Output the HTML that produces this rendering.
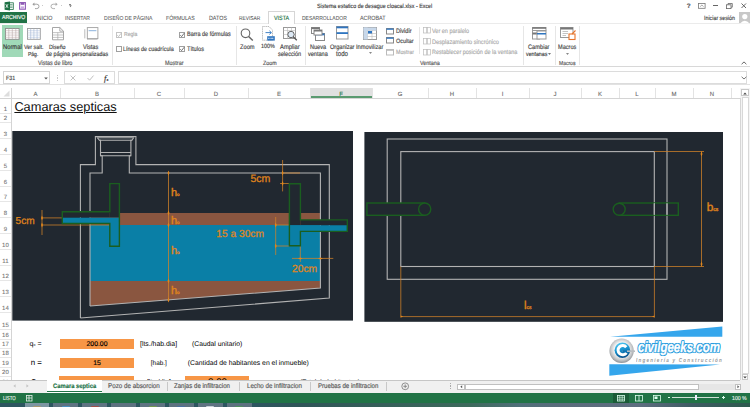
<!DOCTYPE html>
<html><head><meta charset="utf-8"><style>
html,body{margin:0;padding:0;}
body{width:750px;height:407px;overflow:hidden;position:relative;background:#fff;font-family:"Liberation Sans",sans-serif;text-rendering:geometricPrecision;}
body>div,body>span,body>svg{position:absolute;}
body>span{white-space:nowrap;display:block;-webkit-text-stroke:0.15px currentColor;}
svg{overflow:visible;}
</style></head><body>
<svg style="left:4px;top:1px" width="10" height="10"><rect x="4.5" y="1.8" width="4.8" height="6.6" fill="#fff" stroke="#1e7145" stroke-width=".8"/><path d="M5.5 3.6H8.6M5.5 5.1H8.6M5.5 6.6H8.6" stroke="#1e7145" stroke-width=".6"/><path d="M0.6 1.2L6 0.4V9.6L0.6 8.8Z" fill="#1e7145"/><path d="M1.8 3.2L4 6.8M4 3.2L1.8 6.8" stroke="#fff" stroke-width=".8"/></svg>
<svg style="left:19px;top:2px" width="7" height="8"><rect x="0.6" y="0.6" width="5.8" height="6.6" fill="#fff" stroke="#8e5bb5" stroke-width="1.1"/><rect x="1.6" y="0.6" width="3.8" height="2.2" fill="#8e5bb5"/><rect x="1.8" y="4.4" width="3.4" height="2.4" fill="#c8a8e0"/></svg>
<svg style="left:31.5px;top:2px" width="8" height="7"><path d="M2 2.2H4.8A2.2 2.2 0 0 1 4.8 6.6H3" fill="none" stroke="#9a9a9a" stroke-width=".9"/><path d="M0.4 2.2L2.4 0.4V4Z" fill="#9a9a9a"/></svg>
<div style="left:42.00px;top:5.00px;width:1.20px;height:1.00px;background:#c8c8c8;"></div>
<svg style="left:49.5px;top:2px" width="8" height="7"><path d="M6 2.2H3.2A2.2 2.2 0 0 0 3.2 6.6H5" fill="none" stroke="#a8a8a8" stroke-width=".9"/><path d="M7.6 2.2L5.6 0.4V4Z" fill="#a8a8a8"/></svg>
<div style="left:61.00px;top:5.00px;width:1.20px;height:1.00px;background:#c8c8c8;"></div>
<div style="left:68.80px;top:4.00px;width:2.40px;height:0.60px;background:#888;"></div>
<svg style="left:68.5px;top:5px" width="3" height="3"><path d="M0.2 0.3H2.8L1.5 2.2Z" fill="#777"/></svg>
<span style="left:317.00px;top:4.19px;font-size:6.154px;line-height:6.154px;color:#444;font-family:'Liberation Sans',sans-serif;transform:scaleX(0.870);transform-origin:0 0;">Sistema estatico de desague cloacal.xlsx - Excel</span>
<span style="left:686.80px;top:3.92px;font-size:6.500px;line-height:6.500px;color:#555;font-weight:bold;font-family:'Liberation Sans',sans-serif;">?</span>
<svg style="left:697.5px;top:3px" width="8" height="6"><rect x="0.5" y="0.5" width="6.6" height="4.8" fill="none" stroke="#777" stroke-width=".8"/><path d="M2.2 3.6L3.8 2L5.4 3.6" fill="none" stroke="#777" stroke-width=".7"/></svg>
<div style="left:712.80px;top:5.40px;width:4.80px;height:0.80px;background:#666;"></div>
<svg style="left:726px;top:2.8px" width="7" height="6"><path d="M2 1.8V0.5H6.3V4.2H5" fill="none" stroke="#666" stroke-width=".8"/><rect x="0.5" y="1.8" width="4.5" height="3.8" fill="#fff" stroke="#666" stroke-width=".8"/></svg>
<svg style="left:740.5px;top:3px" width="5.5" height="5.5"><path d="M0.5 0.5L5 5M5 0.5L0.5 5" stroke="#555" stroke-width=".9"/></svg>
<div style="left:0.00px;top:11.80px;width:27.40px;height:10.90px;background:#217346;"></div>
<span style="left:2.00px;top:16.30px;font-size:5.881px;line-height:5.881px;color:#fff;font-family:'Liberation Sans',sans-serif;transform:scaleX(0.870);transform-origin:0 0;">ARCHIVO</span>
<span style="left:35.50px;top:15.72px;font-size:6.210px;line-height:6.210px;color:#555;font-family:'Liberation Sans',sans-serif;transform:scaleX(0.870);transform-origin:0 0;-webkit-text-stroke:0.05px currentColor;">INICIO</span>
<span style="left:65.40px;top:16.52px;font-size:5.792px;line-height:5.792px;color:#555;font-family:'Liberation Sans',sans-serif;transform:scaleX(0.870);transform-origin:0 0;-webkit-text-stroke:0.05px currentColor;">INSERTAR</span>
<span style="left:103.90px;top:16.51px;font-size:5.848px;line-height:5.848px;color:#555;font-family:'Liberation Sans',sans-serif;transform:scaleX(0.870);transform-origin:0 0;-webkit-text-stroke:0.05px currentColor;">DISEÑO DE PÁGINA</span>
<span style="left:166.40px;top:16.64px;font-size:5.961px;line-height:5.961px;color:#555;font-family:'Liberation Sans',sans-serif;transform:scaleX(0.870);transform-origin:0 0;-webkit-text-stroke:0.05px currentColor;">FÓRMULAS</span>
<span style="left:208.60px;top:15.73px;font-size:6.174px;line-height:6.174px;color:#555;font-family:'Liberation Sans',sans-serif;transform:scaleX(0.870);transform-origin:0 0;-webkit-text-stroke:0.05px currentColor;">DATOS</span>
<span style="left:239.40px;top:16.54px;font-size:5.606px;line-height:5.606px;color:#555;font-family:'Liberation Sans',sans-serif;transform:scaleX(0.870);transform-origin:0 0;-webkit-text-stroke:0.05px currentColor;">REVISAR</span>
<span style="left:302.40px;top:16.53px;font-size:5.758px;line-height:5.758px;color:#555;font-family:'Liberation Sans',sans-serif;transform:scaleX(0.870);transform-origin:0 0;-webkit-text-stroke:0.05px currentColor;">DESARROLLADOR</span>
<span style="left:360.00px;top:15.73px;font-size:6.185px;line-height:6.185px;color:#555;font-family:'Liberation Sans',sans-serif;transform:scaleX(0.870);transform-origin:0 0;-webkit-text-stroke:0.05px currentColor;">ACROBAT</span>
<div style="left:0.00px;top:22.60px;width:750.00px;height:0.70px;background:#ebebeb;"></div>
<div style="left:268.40px;top:11.40px;width:26.40px;height:12.20px;border:1px solid #d6d6d6;box-sizing:border-box;background:#fff;border-bottom:none"></div>
<span style="left:274.00px;top:15.77px;font-size:6.209px;line-height:6.209px;color:#217346;font-family:'Liberation Sans',sans-serif;transform:scaleX(0.870);transform-origin:0 0;">VISTA</span>
<span style="left:704.00px;top:15.51px;font-size:6.109px;line-height:6.109px;color:#444;font-family:'Liberation Sans',sans-serif;transform:scaleX(0.870);transform-origin:0 0;">Iniciar sesión</span>
<div style="left:738.80px;top:11.50px;width:11.20px;height:11.50px;background:#c8c8c8;"></div>
<svg style="left:738.8px;top:11.5px" width="11.2" height="11.5"><circle cx="5.8" cy="4.6" r="2.6" fill="#fff"/><path d="M1 11.5 Q5.8 5.8 10.6 11.5Z" fill="#fff"/></svg>
<div style="left:0.00px;top:66.40px;width:750.00px;height:1.00px;background:#d8d8d8;"></div>
<div style="left:112.30px;top:25.50px;width:0.80px;height:39.00px;background:#e6e6e6;"></div>
<div style="left:235.60px;top:25.50px;width:0.80px;height:39.00px;background:#e6e6e6;"></div>
<div style="left:305.40px;top:25.50px;width:0.80px;height:39.00px;background:#e6e6e6;"></div>
<div style="left:522.70px;top:25.50px;width:0.80px;height:39.00px;background:#e6e6e6;"></div>
<div style="left:554.50px;top:25.50px;width:0.80px;height:39.00px;background:#e6e6e6;"></div>
<div style="left:579.30px;top:25.50px;width:0.80px;height:39.00px;background:#e6e6e6;"></div>
<div style="left:419.40px;top:27.20px;width:0.70px;height:27.30px;background:#e6e6e6;"></div>
<div style="left:1.80px;top:25.40px;width:21.20px;height:31.60px;background:#a0d9b8;"></div>
<svg style="left:5.4px;top:27.6px" width="15" height="12"><rect x="0.5" y="0.5" width="13.6" height="10.8" fill="#fff" stroke="#8a8a8a" stroke-width=".9"/><path d="M0.5 2.7H14M0.5 4.9H14M0.5 7.1H14M0.5 9.3H14" stroke="#c9b3b3" stroke-width=".6"/><path d="M3.8 .5V11.3M7.3 .5V11.3M10.8 .5V11.3" stroke="#b5a8a8" stroke-width=".6"/></svg>
<span style="left:2.80px;top:44.91px;font-size:6.673px;line-height:6.673px;color:#333;font-family:'Liberation Sans',sans-serif;transform:scaleX(0.870);transform-origin:0 0;">Normal</span>
<svg style="left:26.8px;top:27.6px" width="15" height="12"><rect x="0.5" y="0.5" width="12.8" height="10.8" fill="#fff" stroke="#9a9a9a" stroke-width=".9"/><path d="M0.5 2.7H13.3M0.5 4.9H13.3M0.5 7.1H13.3M0.5 9.3H13.3" stroke="#b8c8e0" stroke-width=".6"/><path d="M3.7 .5V11.3M6.9 .5V11.3M10.1 .5V11.3" stroke="#9fb4d4" stroke-width=".6"/></svg>
<span style="left:23.80px;top:44.67px;font-size:6.207px;line-height:6.207px;color:#444;font-family:'Liberation Sans',sans-serif;transform:scaleX(0.870);transform-origin:0 0;">Ver salt.</span>
<span style="left:28.40px;top:53.18px;font-size:5.758px;line-height:5.758px;color:#444;font-family:'Liberation Sans',sans-serif;transform:scaleX(0.870);transform-origin:0 0;">Pág.</span>
<svg style="left:51.5px;top:26.8px" width="13" height="14"><path d="M0.5 0.5H7.8L11.5 4.2V12.8H0.5Z" fill="#fff" stroke="#9c9c9c" stroke-width=".9"/><path d="M7.8 0.5V4.2H11.5" fill="none" stroke="#9c9c9c" stroke-width=".8"/><path d="M1 5.6H11M1 8H11M1 10.4H11M5.8 5.6V12.8" stroke="#aaa" stroke-width=".7"/></svg>
<span style="left:49.40px;top:44.70px;font-size:6.133px;line-height:6.133px;color:#444;font-family:'Liberation Sans',sans-serif;transform:scaleX(0.870);transform-origin:0 0;">Diseño</span>
<span style="left:45.70px;top:52.48px;font-size:6.309px;line-height:6.309px;color:#444;font-family:'Liberation Sans',sans-serif;transform:scaleX(0.870);transform-origin:0 0;">de página</span>
<svg style="left:83.6px;top:26.8px" width="15" height="14"><path d="M0.8 2.2V11.4" stroke="#aaa" stroke-width=".8"/><path d="M3 12.3H13.5" stroke="#b5b5b5" stroke-width=".8"/><rect x="3.3" y="0.6" width="10.6" height="11" fill="#fff" stroke="#a0a0a0" stroke-width=".9"/><path d="M4.6 3.7H12.4" stroke="#7fa9d8" stroke-width=".9"/></svg>
<span style="left:82.80px;top:44.83px;font-size:6.462px;line-height:6.462px;color:#444;font-family:'Liberation Sans',sans-serif;transform:scaleX(0.870);transform-origin:0 0;">Vistas</span>
<span style="left:71.80px;top:52.37px;font-size:6.206px;line-height:6.206px;color:#444;font-family:'Liberation Sans',sans-serif;transform:scaleX(0.870);transform-origin:0 0;">personalizadas</span>
<span style="left:37.60px;top:61.38px;font-size:6.317px;line-height:6.317px;color:#555;font-family:'Liberation Sans',sans-serif;transform:scaleX(0.870);transform-origin:0 0;">Vistas de libro</span>
<div style="left:115.7px;top:31.5px;width:6px;height:6px;border:0.8px solid #c4c4c4;box-sizing:border-box;background:#fff"></div>
<svg style="left:115.7px;top:31.5px" width="7" height="7"><path d="M1.3 3.2 L2.6 4.6 L5.2 1.2" fill="none" stroke="#b8b8b8" stroke-width=".8"/></svg>
<span style="left:123.70px;top:33.20px;font-size:5.854px;line-height:5.854px;color:#aaa;font-family:'Liberation Sans',sans-serif;transform:scaleX(0.870);transform-origin:0 0;">Regla</span>
<div style="left:115.7px;top:45.8px;width:6px;height:6px;border:0.8px solid #a0a0a0;box-sizing:border-box;background:#fff"></div>
<span style="left:123.20px;top:47.09px;font-size:6.293px;line-height:6.293px;color:#444;font-family:'Liberation Sans',sans-serif;transform:scaleX(0.870);transform-origin:0 0;">Líneas de cuadrícula</span>
<div style="left:178.7px;top:31.5px;width:6px;height:6px;border:0.8px solid #a0a0a0;box-sizing:border-box;background:#fff"></div>
<svg style="left:178.7px;top:31.5px" width="7" height="7"><path d="M1.3 3.2 L2.6 4.6 L5.2 1.2" fill="none" stroke="#555" stroke-width=".8"/></svg>
<span style="left:186.80px;top:32.48px;font-size:6.338px;line-height:6.338px;color:#444;font-family:'Liberation Sans',sans-serif;transform:scaleX(0.870);transform-origin:0 0;">Barra de fórmulas</span>
<div style="left:178.7px;top:45.8px;width:6px;height:6px;border:0.8px solid #a0a0a0;box-sizing:border-box;background:#fff"></div>
<svg style="left:178.7px;top:45.8px" width="7" height="7"><path d="M1.3 3.2 L2.6 4.6 L5.2 1.2" fill="none" stroke="#555" stroke-width=".8"/></svg>
<span style="left:186.80px;top:47.11px;font-size:6.515px;line-height:6.515px;color:#444;font-family:'Liberation Sans',sans-serif;transform:scaleX(0.870);transform-origin:0 0;">Títulos</span>
<span style="left:164.80px;top:61.09px;font-size:6.278px;line-height:6.278px;color:#555;font-family:'Liberation Sans',sans-serif;transform:scaleX(0.870);transform-origin:0 0;">Mostrar</span>
<svg style="left:240px;top:27.5px" width="14" height="13"><circle cx="5.5" cy="5.3" r="4.3" fill="none" stroke="#666" stroke-width="1.1"/><path d="M8.6 8.5L12.8 12.5" stroke="#666" stroke-width="1.5"/></svg>
<span style="left:240.40px;top:44.63px;font-size:6.569px;line-height:6.569px;color:#444;font-family:'Liberation Sans',sans-serif;transform:scaleX(0.870);transform-origin:0 0;">Zoom</span>
<svg style="left:261.5px;top:26.4px" width="14" height="15"><path d="M0.5 0.5H7L10.5 4V14.2H0.5Z" fill="#fff" stroke="#a8a8a8" stroke-width=".8" stroke-dasharray="1.2 .6"/><path d="M3.5 6.6H9.2M7.4 4.8L9.4 6.6L7.4 8.4" fill="none" stroke="#2f75c0" stroke-width=".9"/><rect x="5.2" y="10.2" width="7.6" height="4.4" fill="#2f75c0"/><path d="M6.3 12.4H11.8" stroke="#cfe0f3" stroke-width="1.2" stroke-dasharray=".8 .5"/></svg>
<span style="left:261.00px;top:44.48px;font-size:6.205px;line-height:6.205px;color:#444;font-family:'Liberation Sans',sans-serif;transform:scaleX(0.870);transform-origin:0 0;">100%</span>
<svg style="left:283px;top:26.5px" width="15" height="14"><rect x="0.5" y="0.5" width="12" height="11" fill="#fff" stroke="#999"/><path d="M0.5 3.5H12.5M4.5 0.5V11.5M8.5 0.5V11.5M0.5 7.5H12.5" stroke="#bbb" stroke-width=".6"/><circle cx="8" cy="7.5" r="3.2" fill="#dde9f5" stroke="#555" stroke-width=".9"/><path d="M10.2 9.8L13.8 13.3" stroke="#555" stroke-width="1.3"/></svg>
<span style="left:280.00px;top:44.70px;font-size:6.718px;line-height:6.718px;color:#444;font-family:'Liberation Sans',sans-serif;transform:scaleX(0.870);transform-origin:0 0;">Ampliar</span>
<span style="left:278.00px;top:52.36px;font-size:6.400px;line-height:6.400px;color:#444;font-family:'Liberation Sans',sans-serif;transform:scaleX(0.870);transform-origin:0 0;">selección</span>
<span style="left:263.40px;top:61.20px;font-size:6.119px;line-height:6.119px;color:#555;font-family:'Liberation Sans',sans-serif;transform:scaleX(0.870);transform-origin:0 0;">Zoom</span>
<svg style="left:310.8px;top:26.5px" width="14" height="14"><rect x="0.5" y="0.5" width="8" height="6" fill="#fff" stroke="#888"/><rect x="0.5" y="0.5" width="8" height="1.6" fill="#777"/><rect x="4.5" y="6.5" width="9" height="7" fill="#fff" stroke="#888"/><rect x="4.5" y="6.5" width="9" height="1.8" fill="#2f75c0"/><rect x="3" y="3" width="8" height="5" fill="#fff" stroke="#888"/><rect x="3" y="3" width="8" height="1.5" fill="#777"/></svg>
<span style="left:309.80px;top:44.66px;font-size:6.406px;line-height:6.406px;color:#444;font-family:'Liberation Sans',sans-serif;transform:scaleX(0.870);transform-origin:0 0;">Nueva</span>
<span style="left:307.80px;top:52.36px;font-size:6.399px;line-height:6.399px;color:#444;font-family:'Liberation Sans',sans-serif;transform:scaleX(0.870);transform-origin:0 0;">ventana</span>
<svg style="left:336px;top:26.4px" width="13" height="14"><rect x="0.5" y="0.5" width="11.5" height="12.5" fill="#fff" stroke="#999"/><rect x="0.5" y="0.5" width="11.5" height="1.8" fill="#2f75c0"/><rect x="0.5" y="6.2" width="11.5" height="1.8" fill="#2f75c0"/></svg>
<span style="left:330.00px;top:44.65px;font-size:6.418px;line-height:6.418px;color:#444;font-family:'Liberation Sans',sans-serif;transform:scaleX(0.870);transform-origin:0 0;">Organizar</span>
<span style="left:336.00px;top:51.48px;font-size:7.091px;line-height:7.091px;color:#444;font-family:'Liberation Sans',sans-serif;transform:scaleX(0.870);transform-origin:0 0;">todo</span>
<svg style="left:363px;top:26.5px" width="14" height="13"><rect x="0.5" y="0.5" width="13" height="12" fill="#fff" stroke="#999"/><path d="M0.5 3.5H13.5M0.5 6.5H13.5M0.5 9.5H13.5M4.5 0.5V12.5M9 0.5V12.5" stroke="#bbb" stroke-width=".6"/><rect x="0.5" y="0.5" width="13" height="3" fill="#c8d8ea"/><rect x="0.5" y="0.5" width="4" height="12" fill="#c8d8ea"/><rect x="5" y="4" width="4" height="2.5" fill="#2f75c0"/></svg>
<span style="left:356.00px;top:44.62px;font-size:6.594px;line-height:6.594px;color:#444;font-family:'Liberation Sans',sans-serif;transform:scaleX(0.870);transform-origin:0 0;">Inmovilizar</span>
<svg style="left:368.6px;top:52.2px" width="3" height="2"><path d="M0 0H3L1.5 2Z" fill="#888"/></svg>
<svg style="left:386px;top:27.7px" width="8" height="6.5"><rect x="0.5" y="0.5" width="7" height="5.5" fill="#fff" stroke="#888"/><rect x="0.5" y="0.5" width="7" height="1.3" fill="#2f75c0"/></svg>
<span style="left:395.50px;top:28.85px;font-size:6.417px;line-height:6.417px;color:#444;font-family:'Liberation Sans',sans-serif;transform:scaleX(0.870);transform-origin:0 0;">Dividir</span>
<svg style="left:386px;top:37.2px" width="8" height="6.5"><rect x="0.5" y="0.5" width="7" height="5.5" fill="#fff" stroke="#888"/><rect x="0.5" y="0.5" width="7" height="1.3" fill="#2f75c0"/></svg>
<span style="left:395.50px;top:38.96px;font-size:6.244px;line-height:6.244px;color:#444;font-family:'Liberation Sans',sans-serif;transform:scaleX(0.870);transform-origin:0 0;">Ocultar</span>
<svg style="left:386px;top:48.7px" width="8" height="6.5"><rect x="0.5" y="0.5" width="7" height="5.5" fill="#fff" stroke="#bbb"/><rect x="0.5" y="0.5" width="7" height="1.3" fill="#bbb"/></svg>
<span style="left:395.50px;top:50.01px;font-size:6.108px;line-height:6.108px;color:#aaa;font-family:'Liberation Sans',sans-serif;transform:scaleX(0.870);transform-origin:0 0;">Mostrar</span>
<svg style="left:423px;top:27.2px" width="8" height="6.5"><rect x="0.5" y="0.5" width="3.2" height="5.5" fill="none" stroke="#bbb" stroke-width=".7"/><rect x="4.3" y="0.5" width="3.2" height="5.5" fill="none" stroke="#bbb" stroke-width=".7"/></svg>
<span style="left:431.60px;top:28.67px;font-size:6.343px;line-height:6.343px;color:#aaa;font-family:'Liberation Sans',sans-serif;transform:scaleX(0.870);transform-origin:0 0;">Ver en paralelo</span>
<svg style="left:423px;top:38px" width="8" height="6.5"><rect x="0.5" y="0.5" width="3.2" height="5.5" fill="none" stroke="#bbb" stroke-width=".7"/><rect x="4.3" y="0.5" width="3.2" height="5.5" fill="none" stroke="#bbb" stroke-width=".7"/></svg>
<span style="left:431.60px;top:39.54px;font-size:6.448px;line-height:6.448px;color:#aaa;font-family:'Liberation Sans',sans-serif;transform:scaleX(0.870);transform-origin:0 0;">Desplazamiento sincrónico</span>
<svg style="left:423px;top:48.7px" width="8" height="6.5"><rect x="0.5" y="0.5" width="3.2" height="5.5" fill="none" stroke="#bbb" stroke-width=".7"/><rect x="4.3" y="0.5" width="3.2" height="5.5" fill="none" stroke="#bbb" stroke-width=".7"/></svg>
<span style="left:431.60px;top:50.18px;font-size:6.310px;line-height:6.310px;color:#aaa;font-family:'Liberation Sans',sans-serif;transform:scaleX(0.870);transform-origin:0 0;">Restablecer posición de la ventana</span>
<span style="left:419.60px;top:61.27px;font-size:6.235px;line-height:6.235px;color:#555;font-family:'Liberation Sans',sans-serif;transform:scaleX(0.870);transform-origin:0 0;">Ventana</span>
<svg style="left:531.5px;top:26.7px" width="15" height="13"><rect x="0.5" y="0.5" width="7" height="11.5" fill="#fff" stroke="#999"/><rect x="0.5" y="0.5" width="13.5" height="3" fill="#fff" stroke="#999"/><rect x="0.5" y="0.5" width="13.5" height="1.2" fill="#666"/><rect x="0.5" y="5.5" width="7" height="2" fill="#777"/><rect x="5" y="4" width="9" height="8" fill="#fff" stroke="#999"/><rect x="5" y="6" width="9" height="1.5" fill="#2f75c0"/></svg>
<span style="left:527.70px;top:44.80px;font-size:6.543px;line-height:6.543px;color:#444;font-family:'Liberation Sans',sans-serif;transform:scaleX(0.870);transform-origin:0 0;">Cambiar</span>
<span style="left:525.60px;top:51.82px;font-size:6.064px;line-height:6.064px;color:#444;font-family:'Liberation Sans',sans-serif;transform:scaleX(0.870);transform-origin:0 0;">ventanas</span>
<svg style="left:548px;top:52.6px" width="3" height="2"><path d="M0 0H3L1.5 2Z" fill="#777"/></svg>
<svg style="left:559.8px;top:27.3px" width="16" height="13"><rect x="0.5" y="0.5" width="12.5" height="10" fill="#fff" stroke="#999"/><rect x="0.5" y="0.5" width="12.5" height="2" fill="#777"/><path d="M2.5 4.5H8M2.5 6.5H8M2.5 8.5H6" stroke="#aaa" stroke-width=".7"/><rect x="9" y="7" width="6" height="5.5" fill="#fff" stroke="#e8742a" stroke-width="1.1"/><path d="M12 7L15.5 3.5" stroke="#e8742a" stroke-width="1.1"/></svg>
<span style="left:558.00px;top:44.85px;font-size:6.420px;line-height:6.420px;color:#444;font-family:'Liberation Sans',sans-serif;transform:scaleX(0.870);transform-origin:0 0;">Macros</span>
<svg style="left:565.6px;top:52.8px" width="3" height="2"><path d="M0 0H3L1.5 2Z" fill="#888"/></svg>
<span style="left:558.60px;top:61.98px;font-size:5.753px;line-height:5.753px;color:#555;font-family:'Liberation Sans',sans-serif;transform:scaleX(0.870);transform-origin:0 0;">Macros</span>
<svg style="left:741px;top:61px" width="6" height="4"><path d="M0.6 3.2L3 0.9L5.4 3.2" fill="none" stroke="#555" stroke-width=".9"/></svg>
<div style="left:0.00px;top:83.60px;width:750.00px;height:0.80px;background:#e2e2e2;"></div>
<div style="left:2.60px;top:71.20px;width:47.70px;height:12.80px;border:0.8px solid #d4d4d4;box-sizing:border-box;background:#fff;"></div>
<span style="left:6.00px;top:76.10px;font-size:6.141px;line-height:6.141px;color:#444;font-family:'Liberation Sans',sans-serif;transform:scaleX(0.870);transform-origin:0 0;">F31</span>
<svg style="left:43.5px;top:76.5px" width="4" height="3"><path d="M0.2 0.4H3.8L2 2.6Z" fill="#555"/></svg>
<div style="left:56.60px;top:74.50px;width:0.80px;height:1.50px;background:#c8c8c8;"></div>
<div style="left:56.60px;top:77.00px;width:0.80px;height:1.50px;background:#c8c8c8;"></div>
<div style="left:56.60px;top:79.50px;width:0.80px;height:1.50px;background:#c8c8c8;"></div>
<div style="left:64.30px;top:71.20px;width:50.90px;height:12.80px;border:0.8px solid #dcdcdc;box-sizing:border-box;background:#fff;"></div>
<svg style="left:70px;top:75px" width="6" height="6"><path d="M0.6 0.6L5.4 5.4M5.4 0.6L0.6 5.4" stroke="#b0b0b0" stroke-width=".8"/></svg>
<svg style="left:86.8px;top:75px" width="7" height="6"><path d="M0.5 3L2.6 5.2L6.5 0.6" fill="none" stroke="#b0b0b0" stroke-width=".8"/></svg>
<span style="left:104.00px;top:73.58px;font-size:8.500px;line-height:8.500px;color:#333;font-family:'Liberation Serif',sans-serif;"><i>f</i><span style="font-size:4px">x</span></span>
<div style="left:117.50px;top:71.20px;width:629.80px;height:12.80px;border:0.8px solid #dcdcdc;box-sizing:border-box;background:#fff;"></div>
<svg style="left:740.5px;top:76px" width="6" height="4"><path d="M0.6 0.8L3 3L5.4 0.8" fill="none" stroke="#666" stroke-width=".9"/></svg>
<div style="left:0.00px;top:97.60px;width:740.00px;height:0.80px;background:#d4d4d4;"></div>
<div style="left:310.00px;top:88.40px;width:61.70px;height:9.60px;background:#e0e0e0;"></div>
<div style="left:310.00px;top:96.40px;width:61.70px;height:1.80px;background:#5a9a70;"></div>
<div style="left:60.00px;top:88.00px;width:0.70px;height:9.60px;background:#e3e3e3;"></div>
<span style="left:30.50px;top:91.53px;font-size:6.000px;line-height:6.000px;color:#666;font-family:'Liberation Sans',sans-serif;width:10px;text-align:center;-webkit-text-stroke:0.1px currentColor;">A</span>
<div style="left:134.00px;top:88.00px;width:0.70px;height:9.60px;background:#e3e3e3;"></div>
<span style="left:92.00px;top:91.53px;font-size:6.000px;line-height:6.000px;color:#666;font-family:'Liberation Sans',sans-serif;width:10px;text-align:center;-webkit-text-stroke:0.1px currentColor;">B</span>
<div style="left:184.00px;top:88.00px;width:0.70px;height:9.60px;background:#e3e3e3;"></div>
<span style="left:154.00px;top:91.53px;font-size:6.000px;line-height:6.000px;color:#666;font-family:'Liberation Sans',sans-serif;width:10px;text-align:center;-webkit-text-stroke:0.1px currentColor;">C</span>
<div style="left:248.00px;top:88.00px;width:0.70px;height:9.60px;background:#e3e3e3;"></div>
<span style="left:211.00px;top:91.53px;font-size:6.000px;line-height:6.000px;color:#666;font-family:'Liberation Sans',sans-serif;width:10px;text-align:center;-webkit-text-stroke:0.1px currentColor;">D</span>
<div style="left:310.00px;top:88.00px;width:0.70px;height:9.60px;background:#e3e3e3;"></div>
<span style="left:274.00px;top:91.53px;font-size:6.000px;line-height:6.000px;color:#666;font-family:'Liberation Sans',sans-serif;width:10px;text-align:center;-webkit-text-stroke:0.1px currentColor;">E</span>
<div style="left:372.00px;top:88.00px;width:0.70px;height:9.60px;background:#e3e3e3;"></div>
<span style="left:336.00px;top:91.53px;font-size:6.000px;line-height:6.000px;color:#217346;font-family:'Liberation Sans',sans-serif;width:10px;text-align:center;-webkit-text-stroke:0.1px currentColor;">F</span>
<div style="left:428.00px;top:88.00px;width:0.70px;height:9.60px;background:#e3e3e3;"></div>
<span style="left:395.00px;top:91.53px;font-size:6.000px;line-height:6.000px;color:#666;font-family:'Liberation Sans',sans-serif;width:10px;text-align:center;-webkit-text-stroke:0.1px currentColor;">G</span>
<div style="left:476.00px;top:88.00px;width:0.70px;height:9.60px;background:#e3e3e3;"></div>
<span style="left:447.00px;top:91.53px;font-size:6.000px;line-height:6.000px;color:#666;font-family:'Liberation Sans',sans-serif;width:10px;text-align:center;-webkit-text-stroke:0.1px currentColor;">H</span>
<div style="left:529.00px;top:88.00px;width:0.70px;height:9.60px;background:#e3e3e3;"></div>
<span style="left:497.50px;top:91.53px;font-size:6.000px;line-height:6.000px;color:#666;font-family:'Liberation Sans',sans-serif;width:10px;text-align:center;-webkit-text-stroke:0.1px currentColor;">I</span>
<div style="left:581.00px;top:88.00px;width:0.70px;height:9.60px;background:#e3e3e3;"></div>
<span style="left:550.00px;top:91.53px;font-size:6.000px;line-height:6.000px;color:#666;font-family:'Liberation Sans',sans-serif;width:10px;text-align:center;-webkit-text-stroke:0.1px currentColor;">J</span>
<div style="left:619.00px;top:88.00px;width:0.70px;height:9.60px;background:#e3e3e3;"></div>
<span style="left:595.00px;top:91.53px;font-size:6.000px;line-height:6.000px;color:#666;font-family:'Liberation Sans',sans-serif;width:10px;text-align:center;-webkit-text-stroke:0.1px currentColor;">K</span>
<div style="left:655.00px;top:88.00px;width:0.70px;height:9.60px;background:#e3e3e3;"></div>
<span style="left:632.00px;top:91.53px;font-size:6.000px;line-height:6.000px;color:#666;font-family:'Liberation Sans',sans-serif;width:10px;text-align:center;-webkit-text-stroke:0.1px currentColor;">L</span>
<div style="left:693.00px;top:88.00px;width:0.70px;height:9.60px;background:#e3e3e3;"></div>
<span style="left:669.00px;top:91.53px;font-size:6.000px;line-height:6.000px;color:#666;font-family:'Liberation Sans',sans-serif;width:10px;text-align:center;-webkit-text-stroke:0.1px currentColor;">M</span>
<div style="left:730.60px;top:88.00px;width:0.70px;height:9.60px;background:#e3e3e3;"></div>
<span style="left:706.80px;top:91.53px;font-size:6.000px;line-height:6.000px;color:#666;font-family:'Liberation Sans',sans-serif;width:10px;text-align:center;-webkit-text-stroke:0.1px currentColor;">N</span>
<svg style="left:3px;top:89px" width="7" height="8"><path d="M6.5 1.5V7.5H0.5Z" fill="#ddd"/></svg>
<div style="left:10.80px;top:88.00px;width:0.80px;height:292.00px;background:#d4d4d4;"></div>
<div style="left:0.00px;top:112.85px;width:10.80px;height:0.70px;background:#e6e6e6;"></div>
<span style="left:0.00px;top:106.83px;font-size:6.000px;line-height:6.000px;color:#777;font-family:'Liberation Sans',sans-serif;width:10.8px;text-align:center;-webkit-text-stroke:0.1px currentColor;">1</span>
<div style="left:0.00px;top:122.15px;width:10.80px;height:0.70px;background:#e6e6e6;"></div>
<span style="left:0.00px;top:116.13px;font-size:6.000px;line-height:6.000px;color:#777;font-family:'Liberation Sans',sans-serif;width:10.8px;text-align:center;-webkit-text-stroke:0.1px currentColor;">2</span>
<div style="left:0.00px;top:138.35px;width:10.80px;height:0.70px;background:#e6e6e6;"></div>
<span style="left:0.00px;top:132.33px;font-size:6.000px;line-height:6.000px;color:#777;font-family:'Liberation Sans',sans-serif;width:10.8px;text-align:center;-webkit-text-stroke:0.1px currentColor;">3</span>
<div style="left:0.00px;top:154.05px;width:10.80px;height:0.70px;background:#e6e6e6;"></div>
<span style="left:0.00px;top:148.03px;font-size:6.000px;line-height:6.000px;color:#777;font-family:'Liberation Sans',sans-serif;width:10.8px;text-align:center;-webkit-text-stroke:0.1px currentColor;">4</span>
<div style="left:0.00px;top:169.85px;width:10.80px;height:0.70px;background:#e6e6e6;"></div>
<span style="left:0.00px;top:163.83px;font-size:6.000px;line-height:6.000px;color:#777;font-family:'Liberation Sans',sans-serif;width:10.8px;text-align:center;-webkit-text-stroke:0.1px currentColor;">5</span>
<div style="left:0.00px;top:185.55px;width:10.80px;height:0.70px;background:#e6e6e6;"></div>
<span style="left:0.00px;top:179.53px;font-size:6.000px;line-height:6.000px;color:#777;font-family:'Liberation Sans',sans-serif;width:10.8px;text-align:center;-webkit-text-stroke:0.1px currentColor;">6</span>
<div style="left:0.00px;top:201.35px;width:10.80px;height:0.70px;background:#e6e6e6;"></div>
<span style="left:0.00px;top:195.33px;font-size:6.000px;line-height:6.000px;color:#777;font-family:'Liberation Sans',sans-serif;width:10.8px;text-align:center;-webkit-text-stroke:0.1px currentColor;">7</span>
<div style="left:0.00px;top:217.15px;width:10.80px;height:0.70px;background:#e6e6e6;"></div>
<span style="left:0.00px;top:211.13px;font-size:6.000px;line-height:6.000px;color:#777;font-family:'Liberation Sans',sans-serif;width:10.8px;text-align:center;-webkit-text-stroke:0.1px currentColor;">8</span>
<div style="left:0.00px;top:232.95px;width:10.80px;height:0.70px;background:#e6e6e6;"></div>
<span style="left:0.00px;top:226.93px;font-size:6.000px;line-height:6.000px;color:#777;font-family:'Liberation Sans',sans-serif;width:10.8px;text-align:center;-webkit-text-stroke:0.1px currentColor;">9</span>
<div style="left:0.00px;top:248.75px;width:10.80px;height:0.70px;background:#e6e6e6;"></div>
<span style="left:0.00px;top:242.73px;font-size:6.000px;line-height:6.000px;color:#777;font-family:'Liberation Sans',sans-serif;width:10.8px;text-align:center;-webkit-text-stroke:0.1px currentColor;">10</span>
<div style="left:0.00px;top:264.55px;width:10.80px;height:0.70px;background:#e6e6e6;"></div>
<span style="left:0.00px;top:258.53px;font-size:6.000px;line-height:6.000px;color:#777;font-family:'Liberation Sans',sans-serif;width:10.8px;text-align:center;-webkit-text-stroke:0.1px currentColor;">11</span>
<div style="left:0.00px;top:280.25px;width:10.80px;height:0.70px;background:#e6e6e6;"></div>
<span style="left:0.00px;top:274.23px;font-size:6.000px;line-height:6.000px;color:#777;font-family:'Liberation Sans',sans-serif;width:10.8px;text-align:center;-webkit-text-stroke:0.1px currentColor;">12</span>
<div style="left:0.00px;top:296.05px;width:10.80px;height:0.70px;background:#e6e6e6;"></div>
<span style="left:0.00px;top:290.03px;font-size:6.000px;line-height:6.000px;color:#777;font-family:'Liberation Sans',sans-serif;width:10.8px;text-align:center;-webkit-text-stroke:0.1px currentColor;">13</span>
<div style="left:0.00px;top:312.45px;width:10.80px;height:0.70px;background:#e6e6e6;"></div>
<span style="left:0.00px;top:306.43px;font-size:6.000px;line-height:6.000px;color:#777;font-family:'Liberation Sans',sans-serif;width:10.8px;text-align:center;-webkit-text-stroke:0.1px currentColor;">14</span>
<div style="left:0.00px;top:328.95px;width:10.80px;height:0.70px;background:#e6e6e6;"></div>
<span style="left:0.00px;top:322.93px;font-size:6.000px;line-height:6.000px;color:#777;font-family:'Liberation Sans',sans-serif;width:10.8px;text-align:center;-webkit-text-stroke:0.1px currentColor;">15</span>
<div style="left:0.00px;top:338.65px;width:10.80px;height:0.70px;background:#e6e6e6;"></div>
<span style="left:0.00px;top:332.63px;font-size:6.000px;line-height:6.000px;color:#777;font-family:'Liberation Sans',sans-serif;width:10.8px;text-align:center;-webkit-text-stroke:0.1px currentColor;">16</span>
<div style="left:0.00px;top:347.95px;width:10.80px;height:0.70px;background:#e6e6e6;"></div>
<span style="left:0.00px;top:341.93px;font-size:6.000px;line-height:6.000px;color:#777;font-family:'Liberation Sans',sans-serif;width:10.8px;text-align:center;-webkit-text-stroke:0.1px currentColor;">17</span>
<div style="left:0.00px;top:357.35px;width:10.80px;height:0.70px;background:#e6e6e6;"></div>
<span style="left:0.00px;top:351.33px;font-size:6.000px;line-height:6.000px;color:#777;font-family:'Liberation Sans',sans-serif;width:10.8px;text-align:center;-webkit-text-stroke:0.1px currentColor;">18</span>
<div style="left:0.00px;top:366.65px;width:10.80px;height:0.70px;background:#e6e6e6;"></div>
<span style="left:0.00px;top:360.63px;font-size:6.000px;line-height:6.000px;color:#777;font-family:'Liberation Sans',sans-serif;width:10.8px;text-align:center;-webkit-text-stroke:0.1px currentColor;">19</span>
<div style="left:0.00px;top:376.25px;width:10.80px;height:0.70px;background:#e6e6e6;"></div>
<span style="left:0.00px;top:370.23px;font-size:6.000px;line-height:6.000px;color:#777;font-family:'Liberation Sans',sans-serif;width:10.8px;text-align:center;-webkit-text-stroke:0.1px currentColor;">20</span>
<div style="left:0.00px;top:385.65px;width:10.80px;height:0.70px;background:#e6e6e6;"></div>
<span style="left:0.00px;top:379.63px;font-size:6.000px;line-height:6.000px;color:#777;font-family:'Liberation Sans',sans-serif;width:10.8px;text-align:center;-webkit-text-stroke:0.1px currentColor;">21</span>
<div style="left:740.00px;top:88.00px;width:10.00px;height:292.00px;background:#f4f4f4;"></div>
<div style="left:740.00px;top:97.60px;width:0.70px;height:282.40px;background:#d6d6d6;"></div>
<div style="left:741.30px;top:89.30px;width:7.40px;height:7.20px;border:0.8px solid #c8c8c8;box-sizing:border-box;background:#fff;"></div>
<svg style="left:743px;top:91.5px" width="4" height="3"><path d="M0.2 2.6L2 0.4L3.8 2.6Z" fill="#444"/></svg>
<div style="left:741.50px;top:97.00px;width:7.10px;height:276.50px;border:0.8px solid #d8d8d8;box-sizing:border-box;background:#fff;"></div>
<div style="left:741.80px;top:373.80px;width:6.70px;height:6.40px;border:0.8px solid #c8c8c8;box-sizing:border-box;background:#fff;"></div>
<svg style="left:743.2px;top:376px" width="4" height="3"><path d="M0.2 0.4L2 2.6L3.8 0.4Z" fill="#444"/></svg>
<span style="left:14.40px;top:100.65px;font-size:12.796px;line-height:12.796px;color:#111;font-family:'Liberation Sans',sans-serif;text-decoration:underline;text-decoration-thickness:1px;text-underline-offset:1px;-webkit-text-stroke:0;">Camaras septicas</span>
<svg style="left:0;top:0" width="750" height="407"><rect x="12.3" y="131" width="340.7" height="189.6" fill="#212830"/><rect x="364.4" y="132" width="358.6" height="189.8" fill="#212830"/><rect x="90" y="213" width="230.4" height="12" fill="#8a5640"/><rect x="90" y="225" width="230.4" height="56" fill="#0a7fa6"/><polygon points="90,281 320.4,281 320.4,288 90,306" fill="#8a5640"/><polyline points="80.4,318 80.4,164.6 95.4,164.6 95.4,136.5 135.9,136.5 135.9,164.6 329.3,164.6 329.3,298.1 80.4,318" fill="none" stroke="#b3b3b3" stroke-width="1.1"/><polyline points="90,306 90,173 102.2,173 102.2,155.8 100.5,155.8 100.5,140.3 99.4,140.3 97.4,137.8 133.6,137.8 132,140.3 130.9,140.3 130.9,155.8 129.3,155.8 129.3,173 320.4,173 320.4,288 90,306" fill="none" stroke="#b3b3b3" stroke-width="1.1"/><path d="M99.4 140.3H132M100.5 152.5H130.9M100.5 155.8H130.9" stroke="#b3b3b3" stroke-width="1.1"/><path d="M42 210V235M42 217.9H62.3M42 225H109.8" stroke="#d38328" stroke-width="0.75" fill="none"/><path d="M282.6 160V191.4M282.6 173H300M280 183.5H289.4" stroke="#d38328" stroke-width="0.75" fill="none"/><path d="M168.5 173V300" stroke="#d38328" stroke-width="0.75" fill="none"/><path d="M275.7 217V255M275.7 246H289.4M275.7 225H289.4" stroke="#d38328" stroke-width="0.75" fill="none"/><path d="M292 258.4H333.3M300.3 246V262" stroke="#d38328" stroke-width="0.75" fill="none"/><path d="M168.5 170.6L169.5 173L167.5 173Z M168.5 175.4L169.5 173L167.5 173Z" fill="#e0861c"/><path d="M168.5 210.6L169.5 213L167.5 213Z M168.5 215.4L169.5 213L167.5 213Z" fill="#e0861c"/><path d="M168.5 222.6L169.5 225L167.5 225Z M168.5 227.4L169.5 225L167.5 225Z" fill="#e0861c"/><path d="M168.5 278.6L169.5 281L167.5 281Z M168.5 283.4L169.5 281L167.5 281Z" fill="#e0861c"/><path d="M168.5 297.6L169.5 300L167.5 300Z M168.5 302.4L169.5 300L167.5 300Z" fill="#e0861c"/><path d="M42 215.5L43 217.9L41 217.9Z M42 220.3L43 217.9L41 217.9Z" fill="#e0861c"/><path d="M42 222.6L43 225L41 225Z M42 227.4L43 225L41 225Z" fill="#e0861c"/><path d="M282.6 170.6L283.6 173L281.6 173Z M282.6 175.4L283.6 173L281.6 173Z" fill="#e0861c"/><path d="M282.6 181.1L283.6 183.5L281.6 183.5Z M282.6 185.9L283.6 183.5L281.6 183.5Z" fill="#e0861c"/><path d="M275.7 222.6L276.7 225L274.7 225Z M275.7 227.4L276.7 225L274.7 225Z" fill="#e0861c"/><path d="M275.7 243.6L276.7 246L274.7 246Z M275.7 248.4L276.7 246L274.7 246Z" fill="#e0861c"/><path d="M297.90000000000003 258.4L300.3 259.4L300.3 257.4Z M302.7 258.4L300.3 259.4L300.3 257.4Z" fill="#e0861c"/><path d="M318.0 258.4L320.4 259.4L320.4 257.4Z M322.79999999999995 258.4L320.4 259.4L320.4 257.4Z" fill="#e0861c"/><polygon points="62.3,217.4 119.4,217.4 119.4,246.2 109.8,246.2 109.8,223.5 62.3,223.5" fill="#0a7fa6"/><rect x="109.8" y="183.6" width="9.6" height="33.8" fill="#212830"/><rect x="62.3" y="211.8" width="47.5" height="5.6" fill="#212830"/><polygon points="62.3,211.8 109.8,211.8 109.8,183.6 119.4,183.6 119.4,246.2 109.8,246.2 109.8,223.5 62.3,223.5" fill="none" stroke="#1a5e1f" stroke-width="1.4"/><rect x="289.4" y="183.7" width="11" height="41.6" fill="#212830"/><rect x="300.4" y="219.9" width="46.9" height="5.4" fill="#212830"/><polygon points="289.4,225.3 347.3,225.3 347.3,231.4 300.4,231.4 300.4,245.8 289.4,245.8" fill="#0a7fa6"/><polygon points="289.4,183.7 300.4,183.7 300.4,219.9 347.3,219.9 347.3,231.4 300.4,231.4 300.4,245.8 289.4,245.8" fill="none" stroke="#1a5e1f" stroke-width="1.4"/><rect x="387.2" y="139" width="279.8" height="140.3" fill="none" stroke="#b3b3b3" stroke-width="1.1"/><rect x="400.8" y="151.6" width="253.5" height="114.9" fill="none" stroke="#b3b3b3" stroke-width="1.1"/><path d="M654.3 151.5H704M654.3 266.5H704M701.5 151.5V266.5M400.8 266.5V317.5M654.4 266.5V317.5M400.8 316.6H654.4" stroke="#d38328" stroke-width="0.75" fill="none"/><path d="M701.5 151.5L702.5 153.9L700.5 153.9Z M701.5 156.3L702.5 153.9L700.5 153.9Z" fill="#e0861c"/><path d="M701.5 261.70000000000005L702.5 264.1L700.5 264.1Z M701.5 266.5L702.5 264.1L700.5 264.1Z" fill="#e0861c"/><path d="M403.2 316.6L400.8 315.6V317.6Z M652 316.6L654.4 315.6V317.6Z" fill="#e0861c"/><rect x="366.9" y="203" width="57.8" height="12.3" fill="#212830" stroke="#1a5e1f" stroke-width="1.4"/><circle cx="424.7" cy="209.1" r="6.1" fill="#212830" stroke="#1a5e1f" stroke-width="1.4"/><rect x="619.2" y="203" width="59.1" height="12.3" fill="none" stroke="#1a5e1f" stroke-width="1.4"/><circle cx="619.2" cy="209.2" r="6" fill="#212830" stroke="#1a5e1f" stroke-width="1.4"/><path d="M654.3 203V215.3M667 203V215.3" stroke="#b3b3b3" stroke-width="1.1"/><polygon points="610,336.8 722.3,326.5 722.3,336.8" fill="#35a6ec"/><polygon points="609.3,364.2 720,364.4 609.3,375.8" fill="#35a6ec"/></svg>
<span style="left:15.60px;top:216.71px;font-size:10.164px;line-height:10.164px;color:#e0861c;font-family:'Liberation Sans',sans-serif;-webkit-text-stroke:0.25px currentColor;">5cm</span>
<span style="left:250.40px;top:173.55px;font-size:10.587px;line-height:10.587px;color:#e0861c;font-family:'Liberation Sans',sans-serif;-webkit-text-stroke:0.25px currentColor;">5cm</span>
<span style="left:216.30px;top:230.19px;font-size:10.216px;line-height:10.216px;color:#e0861c;font-family:'Liberation Sans',sans-serif;-webkit-text-stroke:0.25px currentColor;">15 a 30cm</span>
<span style="left:292.00px;top:264.65px;font-size:10.265px;line-height:10.265px;color:#e0861c;font-family:'Liberation Sans',sans-serif;-webkit-text-stroke:0.25px currentColor;">20cm</span>
<span style="left:170.90px;top:188.27px;font-size:11.000px;line-height:11.000px;color:#e0861c;font-family:'Liberation Sans',sans-serif;-webkit-text-stroke:0.35px currentColor;">h<span style="font-size:4.5px">o</span></span>
<span style="left:170.90px;top:216.27px;font-size:11.000px;line-height:11.000px;color:#e0861c;font-family:'Liberation Sans',sans-serif;-webkit-text-stroke:0.35px currentColor;">h<span style="font-size:4.5px">o</span></span>
<span style="left:170.90px;top:246.27px;font-size:11.000px;line-height:11.000px;color:#e0861c;font-family:'Liberation Sans',sans-serif;-webkit-text-stroke:0.35px currentColor;">h<span style="font-size:4.5px">o</span></span>
<span style="left:170.90px;top:286.27px;font-size:11.000px;line-height:11.000px;color:#e0861c;font-family:'Liberation Sans',sans-serif;-webkit-text-stroke:0.35px currentColor;">h<span style="font-size:4.5px">o</span></span>
<span style="left:706.70px;top:202.35px;font-size:11.800px;line-height:11.800px;color:#e0861c;font-family:'Liberation Sans',sans-serif;-webkit-text-stroke:0.35px currentColor;">b<span style="font-size:5px">cs</span></span>
<span style="left:524.00px;top:301.45px;font-size:11.500px;line-height:11.500px;color:#e0861c;font-family:'Liberation Sans',sans-serif;-webkit-text-stroke:0.3px;">l<span style="font-size:5px">cs</span></span>
<svg style="left:608px;top:337px" width="30" height="28"><defs><radialGradient id="g1" cx="50%" cy="45%" r="55%"><stop offset="0" stop-color="#ffffff"/><stop offset=".55" stop-color="#f2f2f2"/><stop offset=".8" stop-color="#c4c6c8"/><stop offset="1" stop-color="#8e9296"/></radialGradient><linearGradient id="g2" x1="0" y1="0" x2="0.3" y2="1"><stop offset="0" stop-color="#5fd2f6"/><stop offset=".5" stop-color="#1a9ad6"/><stop offset="1" stop-color="#0a5590"/></linearGradient></defs><circle cx="13.6" cy="13.8" r="12.2" fill="url(#g1)"/><circle cx="14.4" cy="13.2" r="7.8" fill="url(#g2)"/><path d="M18.2 10.2A4.6 4.6 0 1 0 18.4 15.8" fill="none" stroke="#fff" stroke-width="3"/><path d="M14.6 14.2H27" stroke="#b8bcc0" stroke-width="1.6"/><path d="M14.6 14.2H19" stroke="#0e74b4" stroke-width="2.2"/></svg>
<span style="left:637.50px;top:339.73px;font-size:14.983px;line-height:14.983px;color:#fff;font-weight:bold;font-family:'Liberation Sans',sans-serif;transform:scaleX(0.769);transform-origin:0 0;font-style:italic;-webkit-text-stroke:0.3px #fff;text-shadow:1px 0 0 #2a9ee0,-1px 0 0 #2a9ee0,0 1px 0 #2a9ee0,0 -1px 0 #2a9ee0,1px 1px 0 #2a9ee0,-1px -1px 0 #2a9ee0,1px -1px 0 #2a9ee0,-1px 1px 0 #2a9ee0,0 0 1.5px #1a70b0;">civilgeeks.com</span>
<span style="left:635.50px;top:359.21px;font-size:5.661px;line-height:5.661px;color:#9a9a9a;font-weight:bold;font-family:'Liberation Sans',sans-serif;transform:scaleX(0.800);transform-origin:0 0;font-style:italic;-webkit-text-stroke:0;">I n g e n i e r í a &nbsp; y &nbsp; C o n s t r u c c i ó n</span>
<div style="left:59.60px;top:338.90px;width:74.90px;height:9.80px;background:#f79646;"></div>
<div style="left:59.60px;top:358.00px;width:74.90px;height:9.70px;background:#f79646;"></div>
<div style="left:59.40px;top:376.40px;width:75.10px;height:9.60px;background:#f79646;"></div>
<div style="left:185.30px;top:376.40px;width:63.80px;height:9.60px;background:#f79646;"></div>
<span style="left:29.60px;top:341.47px;font-size:7.000px;line-height:7.000px;color:#000;font-family:'Liberation Sans',sans-serif;-webkit-text-stroke:0;">q<span style="font-size:3.5px">o</span> =</span>
<span style="left:86.50px;top:342.31px;font-size:6.867px;line-height:6.867px;color:#000;font-family:'Liberation Sans',sans-serif;-webkit-text-stroke:0.15px currentColor;">200.00</span>
<span style="left:140.00px;top:342.41px;font-size:6.899px;line-height:6.899px;color:#000;font-family:'Liberation Sans',sans-serif;-webkit-text-stroke:0;">[lts./hab.dia]</span>
<span style="left:192.00px;top:342.35px;font-size:6.818px;line-height:6.818px;color:#000;font-family:'Liberation Sans',sans-serif;-webkit-text-stroke:0;">(Caudal unitario)</span>
<span style="left:30.80px;top:359.33px;font-size:7.899px;line-height:7.899px;color:#000;font-family:'Liberation Sans',sans-serif;-webkit-text-stroke:0;">n =</span>
<span style="left:93.20px;top:360.95px;font-size:6.833px;line-height:6.833px;color:#000;font-family:'Liberation Sans',sans-serif;-webkit-text-stroke:0.15px currentColor;">15</span>
<span style="left:150.80px;top:360.85px;font-size:6.436px;line-height:6.436px;color:#000;font-family:'Liberation Sans',sans-serif;-webkit-text-stroke:0;">[hab.]</span>
<span style="left:187.70px;top:360.85px;font-size:6.835px;line-height:6.835px;color:#000;font-family:'Liberation Sans',sans-serif;-webkit-text-stroke:0;">(Cantidad de habitantes en el inmueble)</span>
<span style="left:31.00px;top:379.47px;font-size:7.000px;line-height:7.000px;color:#000;font-family:'Liberation Sans',sans-serif;-webkit-text-stroke:0;">Q =</span>
<span style="left:85.00px;top:380.97px;font-size:5.810px;line-height:5.810px;color:#000;font-family:'Liberation Sans',sans-serif;-webkit-text-stroke:0;">3000.00</span>
<span style="left:146.90px;top:379.48px;font-size:6.994px;line-height:6.994px;color:#000;font-family:'Liberation Sans',sans-serif;-webkit-text-stroke:0;">[lts./dia]</span>
<span style="left:208.00px;top:378.42px;font-size:9.763px;line-height:9.763px;color:#000;font-family:'Liberation Sans',sans-serif;-webkit-text-stroke:0;">2.00</span>
<span style="left:300.00px;top:380.31px;font-size:6.622px;line-height:6.622px;color:#000;font-family:'Liberation Sans',sans-serif;-webkit-text-stroke:0;">(Total de habitantes)</span>
<div style="left:0.00px;top:379.60px;width:750.00px;height:13.10px;background:#f0f0f0;"></div>
<div style="left:0.00px;top:379.60px;width:740.00px;height:0.70px;background:#c6c6c6;"></div>
<svg style="left:13px;top:384.3px" width="3" height="4"><path d="M2.6 0.2V3.6L0.3 1.9Z" fill="#c4c4c4"/></svg>
<svg style="left:26px;top:384.3px" width="3" height="4"><path d="M0.4 0.2V3.6L2.7 1.9Z" fill="#c4c4c4"/></svg>
<div style="left:47.20px;top:380.30px;width:54.80px;height:12.40px;background:#fff;"></div>
<div style="left:47.20px;top:390.60px;width:54.80px;height:1.60px;background:#217346;"></div>
<span style="left:52.80px;top:384.00px;font-size:6.545px;line-height:6.545px;color:#217346;font-weight:bold;font-family:'Liberation Sans',sans-serif;transform:scaleX(0.893);transform-origin:0 0;">Camara septica</span>
<div style="left:167.30px;top:382.00px;width:0.70px;height:8.50px;background:#c8c8c8;"></div>
<div style="left:238.50px;top:382.00px;width:0.70px;height:8.50px;background:#c8c8c8;"></div>
<div style="left:310.00px;top:382.00px;width:0.70px;height:8.50px;background:#c8c8c8;"></div>
<div style="left:386.00px;top:382.00px;width:0.70px;height:8.50px;background:#c8c8c8;"></div>
<span style="left:108.00px;top:383.47px;font-size:7.018px;line-height:7.018px;color:#555;font-family:'Liberation Sans',sans-serif;transform:scaleX(0.893);transform-origin:0 0;">Pozo de absorcion</span>
<span style="left:174.00px;top:384.45px;font-size:6.839px;line-height:6.839px;color:#555;font-family:'Liberation Sans',sans-serif;transform:scaleX(0.893);transform-origin:0 0;">Zanjas de infiltracion</span>
<span style="left:246.50px;top:384.40px;font-size:6.926px;line-height:6.926px;color:#555;font-family:'Liberation Sans',sans-serif;transform:scaleX(0.893);transform-origin:0 0;">Lecho de infiltracion</span>
<span style="left:317.50px;top:384.45px;font-size:6.849px;line-height:6.849px;color:#555;font-family:'Liberation Sans',sans-serif;transform:scaleX(0.893);transform-origin:0 0;">Pruebas de infiltracion</span>
<svg style="left:401px;top:381.8px" width="9" height="9"><circle cx="4.2" cy="4.3" r="3.4" fill="none" stroke="#777" stroke-width=".8"/><path d="M4.2 2.4V6.2M2.3 4.3H6.1" stroke="#777" stroke-width=".8"/></svg>
<div style="left:450.40px;top:383.00px;width:0.80px;height:1.20px;background:#aaa;"></div>
<div style="left:450.40px;top:385.40px;width:0.80px;height:1.20px;background:#aaa;"></div>
<div style="left:450.40px;top:387.80px;width:0.80px;height:1.20px;background:#aaa;"></div>
<div style="left:457.40px;top:383.70px;width:7.60px;height:5.90px;border:1px solid #c0c0c0;box-sizing:border-box;background:#fff;"></div>
<svg style="left:460px;top:385px" width="3" height="3.5"><path d="M2.2 0.2V3.2L0.3 1.7Z" fill="#555"/></svg>
<div style="left:465.00px;top:383.70px;width:234.00px;height:5.90px;border:1px solid #c0c0c0;box-sizing:border-box;background:#fff;"></div>
<div style="left:699.00px;top:383.70px;width:35.60px;height:5.90px;background:#e6e6e6;"></div>
<div style="left:734.60px;top:383.70px;width:6.20px;height:5.90px;border:1px solid #c0c0c0;box-sizing:border-box;background:#fff;"></div>
<svg style="left:736.8px;top:385px" width="3" height="3.5"><path d="M0.4 0.2V3.2L2.3 1.7Z" fill="#555"/></svg>
<div style="left:0.00px;top:392.70px;width:750.00px;height:10.50px;background:#217346;"></div>
<span style="left:3.30px;top:397.00px;font-size:5.750px;line-height:5.750px;color:#e6efe9;font-family:'Liberation Sans',sans-serif;transform:scaleX(0.769);transform-origin:0 0;">LISTO</span>
<svg style="left:26px;top:394.6px" width="7" height="7"><rect x=".5" y=".5" width="5.5" height="5.5" fill="none" stroke="#e6efe9" stroke-width=".8"/><path d="M.5 3H6M3 .5V6" stroke="#e6efe9" stroke-width=".8"/></svg>
<div style="left:612.50px;top:392.70px;width:16.50px;height:9.90px;background:#1a5b37;"></div>
<svg style="left:616.5px;top:394.8px" width="8" height="6.5"><rect x=".5" y=".5" width="7" height="5.5" fill="none" stroke="#dfe" stroke-width=".8"/><path d="M.5 2.3H7.5M.5 4.2H7.5M2.8 .5V6M5.2 .5V6" stroke="#dfe" stroke-width=".6"/></svg>
<svg style="left:634.5px;top:394.8px" width="8" height="6.5"><rect x=".5" y=".5" width="7" height="5.5" fill="none" stroke="#dfe" stroke-width=".8"/><path d="M4 .5V6" stroke="#dfe" stroke-width=".8"/></svg>
<svg style="left:652.5px;top:394.6px" width="8" height="6.5"><rect x=".5" y=".5" width="7" height="5.5" fill="none" stroke="#dfe" stroke-width=".8"/><rect x="1.5" y="1.5" width="3" height="2.5" fill="#dfe"/></svg>
<div style="left:667.50px;top:397.30px;width:2.50px;height:0.80px;background:#dfe;"></div>
<div style="left:672.00px;top:397.40px;width:47.00px;height:0.60px;background:#cfe0d5;"></div>
<div style="left:695.00px;top:395.20px;width:1.60px;height:5.10px;background:#eef;"></div>
<div style="left:721.80px;top:397.30px;width:3.00px;height:0.80px;background:#dfe;"></div>
<div style="left:722.90px;top:396.20px;width:0.80px;height:3.00px;background:#dfe;"></div>
<span style="left:732.00px;top:396.87px;font-size:5.807px;line-height:5.807px;color:#e6efe9;font-family:'Liberation Sans',sans-serif;transform:scaleX(0.893);transform-origin:0 0;">100 %</span>
<div style="left:0;top:403px;width:750px;height:4px;background:linear-gradient(90deg,#2d5660 0,#2d5660 255px,#2f5558 300px,#3d6a5c 470px,#50707a 520px,#5a6c7c 560px,#5e6e80 640px,#3f5c64 690px,#2d5a4e 750px)"></div>
<div style="left:25.00px;top:403.00px;width:24.00px;height:4.00px;background:#7d96a2;"></div>
<div style="left:53.00px;top:403.00px;width:25.00px;height:4.00px;background:#5f7482;"></div>
<div style="left:82.00px;top:403.00px;width:25.00px;height:4.00px;background:#5f7482;"></div>
<div style="left:111.00px;top:403.00px;width:25.00px;height:4.00px;background:#5d7280;"></div>
<div style="left:140.00px;top:403.00px;width:25.00px;height:4.00px;background:#5f7482;"></div>
<div style="left:169.00px;top:403.00px;width:25.00px;height:4.00px;background:#5d7280;"></div>
<div style="left:198.00px;top:403.00px;width:25.00px;height:4.00px;background:#5f7482;"></div>
<div style="left:227.00px;top:403.00px;width:25.00px;height:4.00px;background:#5d7280;"></div>
<div style="left:33.00px;top:405.50px;width:8.00px;height:1.50px;background:#a89870;border-radius:3px 3px 0 0"></div>
<div style="left:61.50px;top:405.50px;width:8.00px;height:1.50px;background:#4a90c0;border-radius:3px 3px 0 0"></div>
<div style="left:90.50px;top:405.50px;width:8.00px;height:1.50px;background:#a05048;border-radius:3px 3px 0 0"></div>
<div style="left:148.50px;top:405.50px;width:8.00px;height:1.50px;background:#709850;border-radius:3px 3px 0 0"></div>
<div style="left:177.00px;top:405.50px;width:8.00px;height:1.50px;background:#4a70a0;border-radius:3px 3px 0 0"></div>
<div style="left:206.00px;top:405.50px;width:8.00px;height:1.50px;background:#c8d0d8;border-radius:3px 3px 0 0"></div>
<div style="left:235.00px;top:405.50px;width:8.00px;height:1.50px;background:#509060;border-radius:3px 3px 0 0"></div>
</body></html>
